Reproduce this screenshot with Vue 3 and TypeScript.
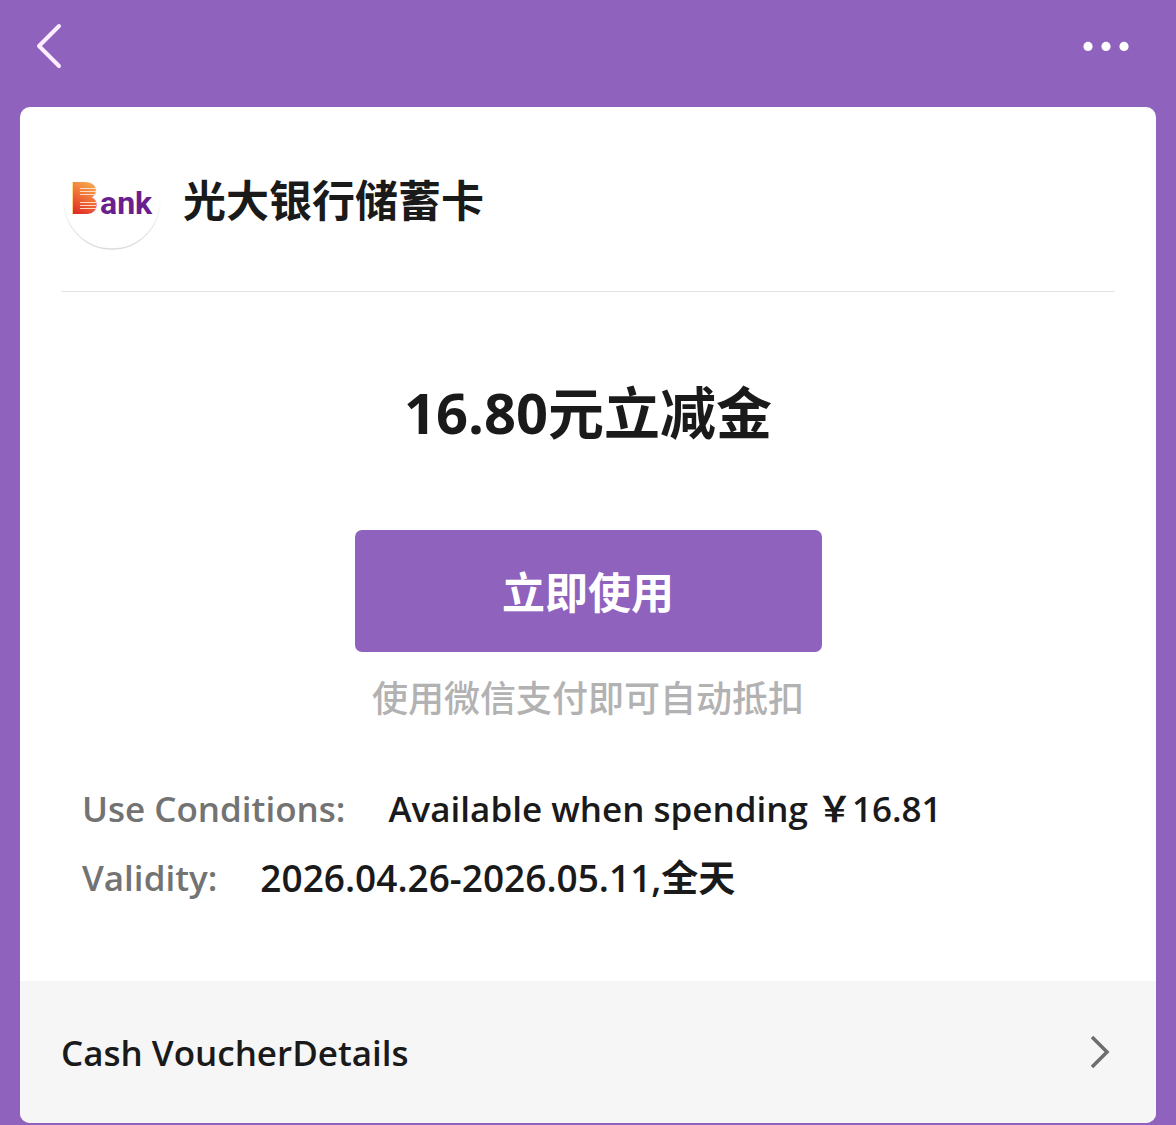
<script setup lang="ts">
interface Condition {
  label: string
  value: string
  numeric?: boolean
}

const bankName = '光大银行储蓄卡'
const voucherTitle = '16.80元立减金'
const conditions: Condition[] = [
  { label: 'Use Conditions:', value: 'Available when spending ￥16.81' },
  { label: 'Validity:', value: '2026.04.26-2026.05.11,全天', numeric: true },
]
const stripes: number[] = [37, 40, 43, 51, 54, 57]
</script>

<template>
  <div class="page">
    <header class="nav">
      <button class="icon-button" type="button" aria-label="Back">
        <svg width="26" height="46" viewBox="0 0 26 46">
          <path d="M23 3 L3 23 L23 43" fill="none" stroke="#fdeeff" stroke-width="4" stroke-linecap="round" stroke-linejoin="round" />
        </svg>
      </button>
      <button class="icon-button" type="button" aria-label="More">
        <svg width="46" height="12" viewBox="0 0 46 12" fill="#ffffff">
          <circle cx="5" cy="6.4" r="4.6" />
          <circle cx="23" cy="6.4" r="4.6" />
          <circle cx="41" cy="6.4" r="4.6" />
        </svg>
      </button>
    </header>

    <main class="card">
      <section class="bank">
        <svg class="logo" width="98" height="98" viewBox="0 0 98 98" role="img" aria-label="Bank">
          <defs>
            <linearGradient id="warm" gradientUnits="userSpaceOnUse" x1="28" y1="30" x2="10" y2="62">
              <stop offset="0" stop-color="#f5ab4c" />
              <stop offset="0.5" stop-color="#ee6a35" />
              <stop offset="1" stop-color="#e02424" />
            </linearGradient>
            <linearGradient id="rim" x1="0" y1="0" x2="0" y2="1">
              <stop offset="0.45" stop-color="#e2e2e2" stop-opacity="0" />
              <stop offset="1" stop-color="#dcdcdc" />
            </linearGradient>
          </defs>
          <circle cx="49" cy="49" r="48" fill="#ffffff" stroke="url(#rim)" stroke-width="1.5" />
          <rect x="12" y="34" width="15" height="26" fill="url(#warm)" />
          <text class="logo-initial" x="7" y="62" fill="url(#warm)">B</text>
          <path v-for="y in stripes" :key="y" :d="`M17 ${y - 0.5} H33`" stroke="#fbd9c4" stroke-width="1.2" />
          <text class="logo-rest" x="37" y="62" fill="#6a1f8f">ank</text>
        </svg>
        <h2 class="bank-name">{{ bankName }}</h2>
      </section>

      <section class="voucher">
        <h1 class="title">{{ voucherTitle }}</h1>
        <button class="use" type="button">立即使用</button>
        <p class="hint">使用微信支付即可自动抵扣</p>
      </section>

      <dl class="conditions">
        <div v-for="item in conditions" :key="item.label" class="condition">
          <dt>{{ item.label }}</dt>
          <dd :class="{ numeric: item.numeric }">{{ item.value }}</dd>
        </div>
      </dl>

      <a class="details" href="#details">
        <span>Cash VoucherDetails</span>
        <svg width="20" height="34" viewBox="0 0 20 34">
          <path d="M2 2 L17 17 L2 32" fill="none" stroke="#6e6e6e" stroke-width="3.6" />
        </svg>
      </a>
    </main>
  </div>
</template>

<style>
body {
  background: #8f62be;
}
</style>

<style scoped>
.page {
  box-sizing: border-box;
  min-height: 100vh;
  padding: 0 20px 2px;
  background: #8f62be;
  color: #1a1a1a;
  font-family: "Open Sans", "Noto Sans CJK SC", sans-serif;
}

.nav {
  display: flex;
  align-items: center;
  justify-content: space-between;
  height: 92px;
  padding: 0 27px 0 16px;
  margin-bottom: 15px;
}

.icon-button {
  display: flex;
  padding: 0;
  border: 0;
  background: none;
  cursor: pointer;
}

.card {
  overflow: hidden;
  border-radius: 10px;
  background: #ffffff;
}

.bank {
  box-sizing: border-box;
  display: flex;
  align-items: center;
  gap: 22px;
  height: 185px;
  margin: 0 41px;
  padding: 4px 2px 0;
  border-bottom: 1px solid #e3e3e3;
}

.logo {
  flex: none;
}

.logo-initial {
  font: 700 45px Roboto, sans-serif;
}

.logo-rest {
  font: 700 32px Roboto, sans-serif;
}

.bank-name {
  margin: 0;
  font-size: 43px;
  font-weight: 700;
  line-height: 60px;
}

.voucher {
  display: flex;
  flex-direction: column;
  align-items: center;
  padding-top: 80px;
}

.title {
  margin: 0 0 78px;
  font-size: 56px;
  font-weight: 700;
  line-height: 80px;
}

.use {
  width: 467px;
  max-width: 90%;
  height: 122px;
  padding: 0 0 2px;
  border: 0;
  border-radius: 7px;
  background: #8f62be;
  color: #ffffff;
  font-family: inherit;
  font-size: 43px;
  font-weight: 700;
  cursor: pointer;
}

.hint {
  margin: 21px 0 0;
  color: #b2b2b2;
  font-size: 36px;
  font-weight: 500;
  line-height: 52px;
}

.conditions {
  margin: 0;
  padding: 49px 62px 69px;
  font-size: 35px;
  font-weight: 600;
  line-height: 69px;
}

.condition {
  display: flex;
  gap: 43px;
}

dt {
  color: #737373;
}

dd {
  margin: 0;
}

.numeric {
  font-size: 37px;
}

.details {
  display: flex;
  align-items: center;
  justify-content: space-between;
  height: 142px;
  padding: 0 46px 0 41px;
  background: #f6f6f6;
  color: inherit;
  font-size: 35px;
  font-weight: 600;
  text-decoration: none;
}
</style>
